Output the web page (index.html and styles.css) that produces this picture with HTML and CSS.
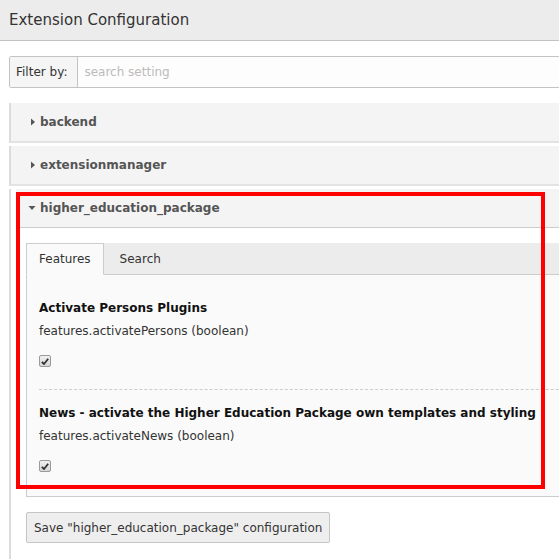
FILE: index.html
```html
<!DOCTYPE html>
<html>
<head>
<meta charset="utf-8">
<link rel="stylesheet" href="styles.css">
</head>
<body>
<div class="topbar"><h1 class="title">Extension Configuration</h1></div>
<div class="main">
  <div class="filter">
    <span class="filter-label">Filter by:</span>
    <input class="filter-input" type="text" placeholder="search setting">
  </div>

  <div class="panel">
    <div class="panel-heading">
      <svg class="caret" width="6" height="8" viewBox="0 0 6 8"><path d="M1 0.5 L5 4 L1 7.5 Z" fill="#555"/></svg>
      <span>backend</span>
    </div>
  </div>
  <div class="panel">
    <div class="panel-heading">
      <svg class="caret" width="6" height="8" viewBox="0 0 6 8"><path d="M1 0.5 L5 4 L1 7.5 Z" fill="#555"/></svg>
      <span>extensionmanager</span>
    </div>
  </div>
  <div class="panel panel-open">
    <div class="panel-inner">
      <div class="panel-heading heading-open">
        <svg class="caret-down" width="8" height="6" viewBox="0 0 8 6"><path d="M0.5 1 L7.5 1 L4 5 Z" fill="#555"/></svg>
        <span>higher_education_package</span>
      </div>
      <div class="panel-body">
        <div class="tabs">
          <div class="tab tab-active">Features</div>
          <div class="tab">Search</div>
        </div>
        <div class="tab-content">
          <div class="setting">
            <div class="setting-title">Activate Persons Plugins</div>
            <div class="setting-desc">features.activatePersons (boolean)</div>
            <span class="check"><svg width="8" height="7" viewBox="0 0 8 7"><path d="M0.8 3.8 L3 6 L7.2 0.8" fill="none" stroke="#333" stroke-width="1.8"/></svg></span>
          </div>
          <div class="setting setting-last">
            <div class="setting-title">News - activate the Higher Education Package own templates and styling</div>
            <div class="setting-desc">features.activateNews (boolean)</div>
            <span class="check"><svg width="8" height="7" viewBox="0 0 8 7"><path d="M0.8 3.8 L3 6 L7.2 0.8" fill="none" stroke="#333" stroke-width="1.8"/></svg></span>
          </div>
        </div>
        <button class="save">Save "higher_education_package" configuration</button>
      </div>
    </div>
    <div class="highlight"></div>
  </div>
</div>
</body>
</html>
```
FILE: styles.css
```css
html, body {
  margin: 0;
  padding: 0;
  overflow: hidden;
  background: #fff;
}
body {
  font-family: "DejaVu Sans", Verdana, sans-serif;
  font-size: 12px;
  color: #333;
  width: 559px;
  height: 559px;
}
.topbar {
  height: 40px;
  background: #ececec;
  border-bottom: 1px solid #c3c3c3;
  display: flex;
  align-items: center;
  padding-left: 9px;
}
.title {
  margin: 0;
  font-size: 15px;
  font-weight: normal;
  color: #333;
}
.main {
  padding: 15px 0 0 9px;
  width: 620px;
}
.filter {
  display: flex;
  height: 32px;
  box-sizing: border-box;
  border: 1px solid #c3c3c3;
  border-radius: 2px;
  margin-bottom: 15px;
}
.filter-label {
  display: flex;
  align-items: center;
  padding: 0 10px 0 6px;
  background: #f5f5f5;
  border-right: 1px solid #c3c3c3;
  color: #333;
}
.filter-input {
  flex: 1;
  border: 0;
  background: #fdfdfd;
  font-family: "DejaVu Sans", Verdana, sans-serif;
  font-size: 12px;
  padding: 0 6px;
  outline: none;
}
.filter-input::placeholder {
  color: #bbb;
}
.panel {
  border-left: 2px solid #dcdcdc;
  border-bottom: 2px solid #e3e3e3;
  background: #f4f4f4;
  margin-bottom: 3px;
}
.panel-heading {
  height: 38px;
  display: flex;
  align-items: center;
  padding-left: 19px;
  font-weight: bold;
  color: #555;
}
.caret {
  margin-right: 4px;
}
.caret-down {
  margin-right: 4px;
}
.panel-open {
  position: relative;
  background: #fff;
  border-bottom: 0;
  margin-bottom: 0;
  height: 400px;
}
.panel-inner {
  margin-left: 5px;
}
.heading-open {
  background: #f4f4f4;
  height: 39px;
  box-sizing: border-box;
  border-bottom: 1px solid #ccc;
  padding-left: 12px;
}
.panel-body {
  padding: 15px 0 0 10px;
  background: #fff;
}
.tabs {
  display: flex;
  height: 32px;
  box-sizing: border-box;
  background: #ececec;
  border-bottom: 1px solid #ccc;
}
.tab {
  display: flex;
  align-items: center;
  padding: 0 16px;
  color: #333;
  margin-bottom: -1px;
}
.tab-active {
  background: #fafafa;
  border: 1px solid #ccc;
  border-bottom: 1px solid #fafafa;
  padding: 0 12px;
}
.tab-content {
  background: #fafafa;
  border-left: 1px solid #ccc;
  border-bottom: 1px solid #ccc;
  padding: 24px 0 0 12px;
}
.setting {
  display: flex;
  flex-direction: column;
  align-items: flex-start;
  padding-bottom: 22px;
  border-bottom: 1px dashed #ccc;
  margin-bottom: 14px;
}
.setting-last {
  border-bottom: 0;
  margin-bottom: 0;
  padding-bottom: 24px;
}
.setting-title {
  font-weight: bold;
  color: #111;
  line-height: 18px;
  margin-bottom: 5px;
}
.setting-desc {
  line-height: 18px;
  color: #333;
}
.check {
  margin-top: 15px;
  width: 12px;
  height: 12px;
  box-sizing: border-box;
  border: 1px solid #9a9a9a;
  border-radius: 2px;
  background: linear-gradient(#f0f0f0, #d6d6d6);
  display: flex;
  align-items: center;
  justify-content: center;
}
.save {
  margin-top: 15px;
  height: 31px;
  padding: 0 7px;
  font-family: "DejaVu Sans", Verdana, sans-serif;
  font-size: 12px;
  color: #333;
  background: #eee;
  border: 1px solid #c5c5c5;
  border-radius: 2px;
}
.highlight {
  position: absolute;
  left: 5px;
  top: 3px;
  width: 529px;
  height: 297px;
  box-sizing: border-box;
  border: 4px solid #ff0000;
  pointer-events: none;
}
```
